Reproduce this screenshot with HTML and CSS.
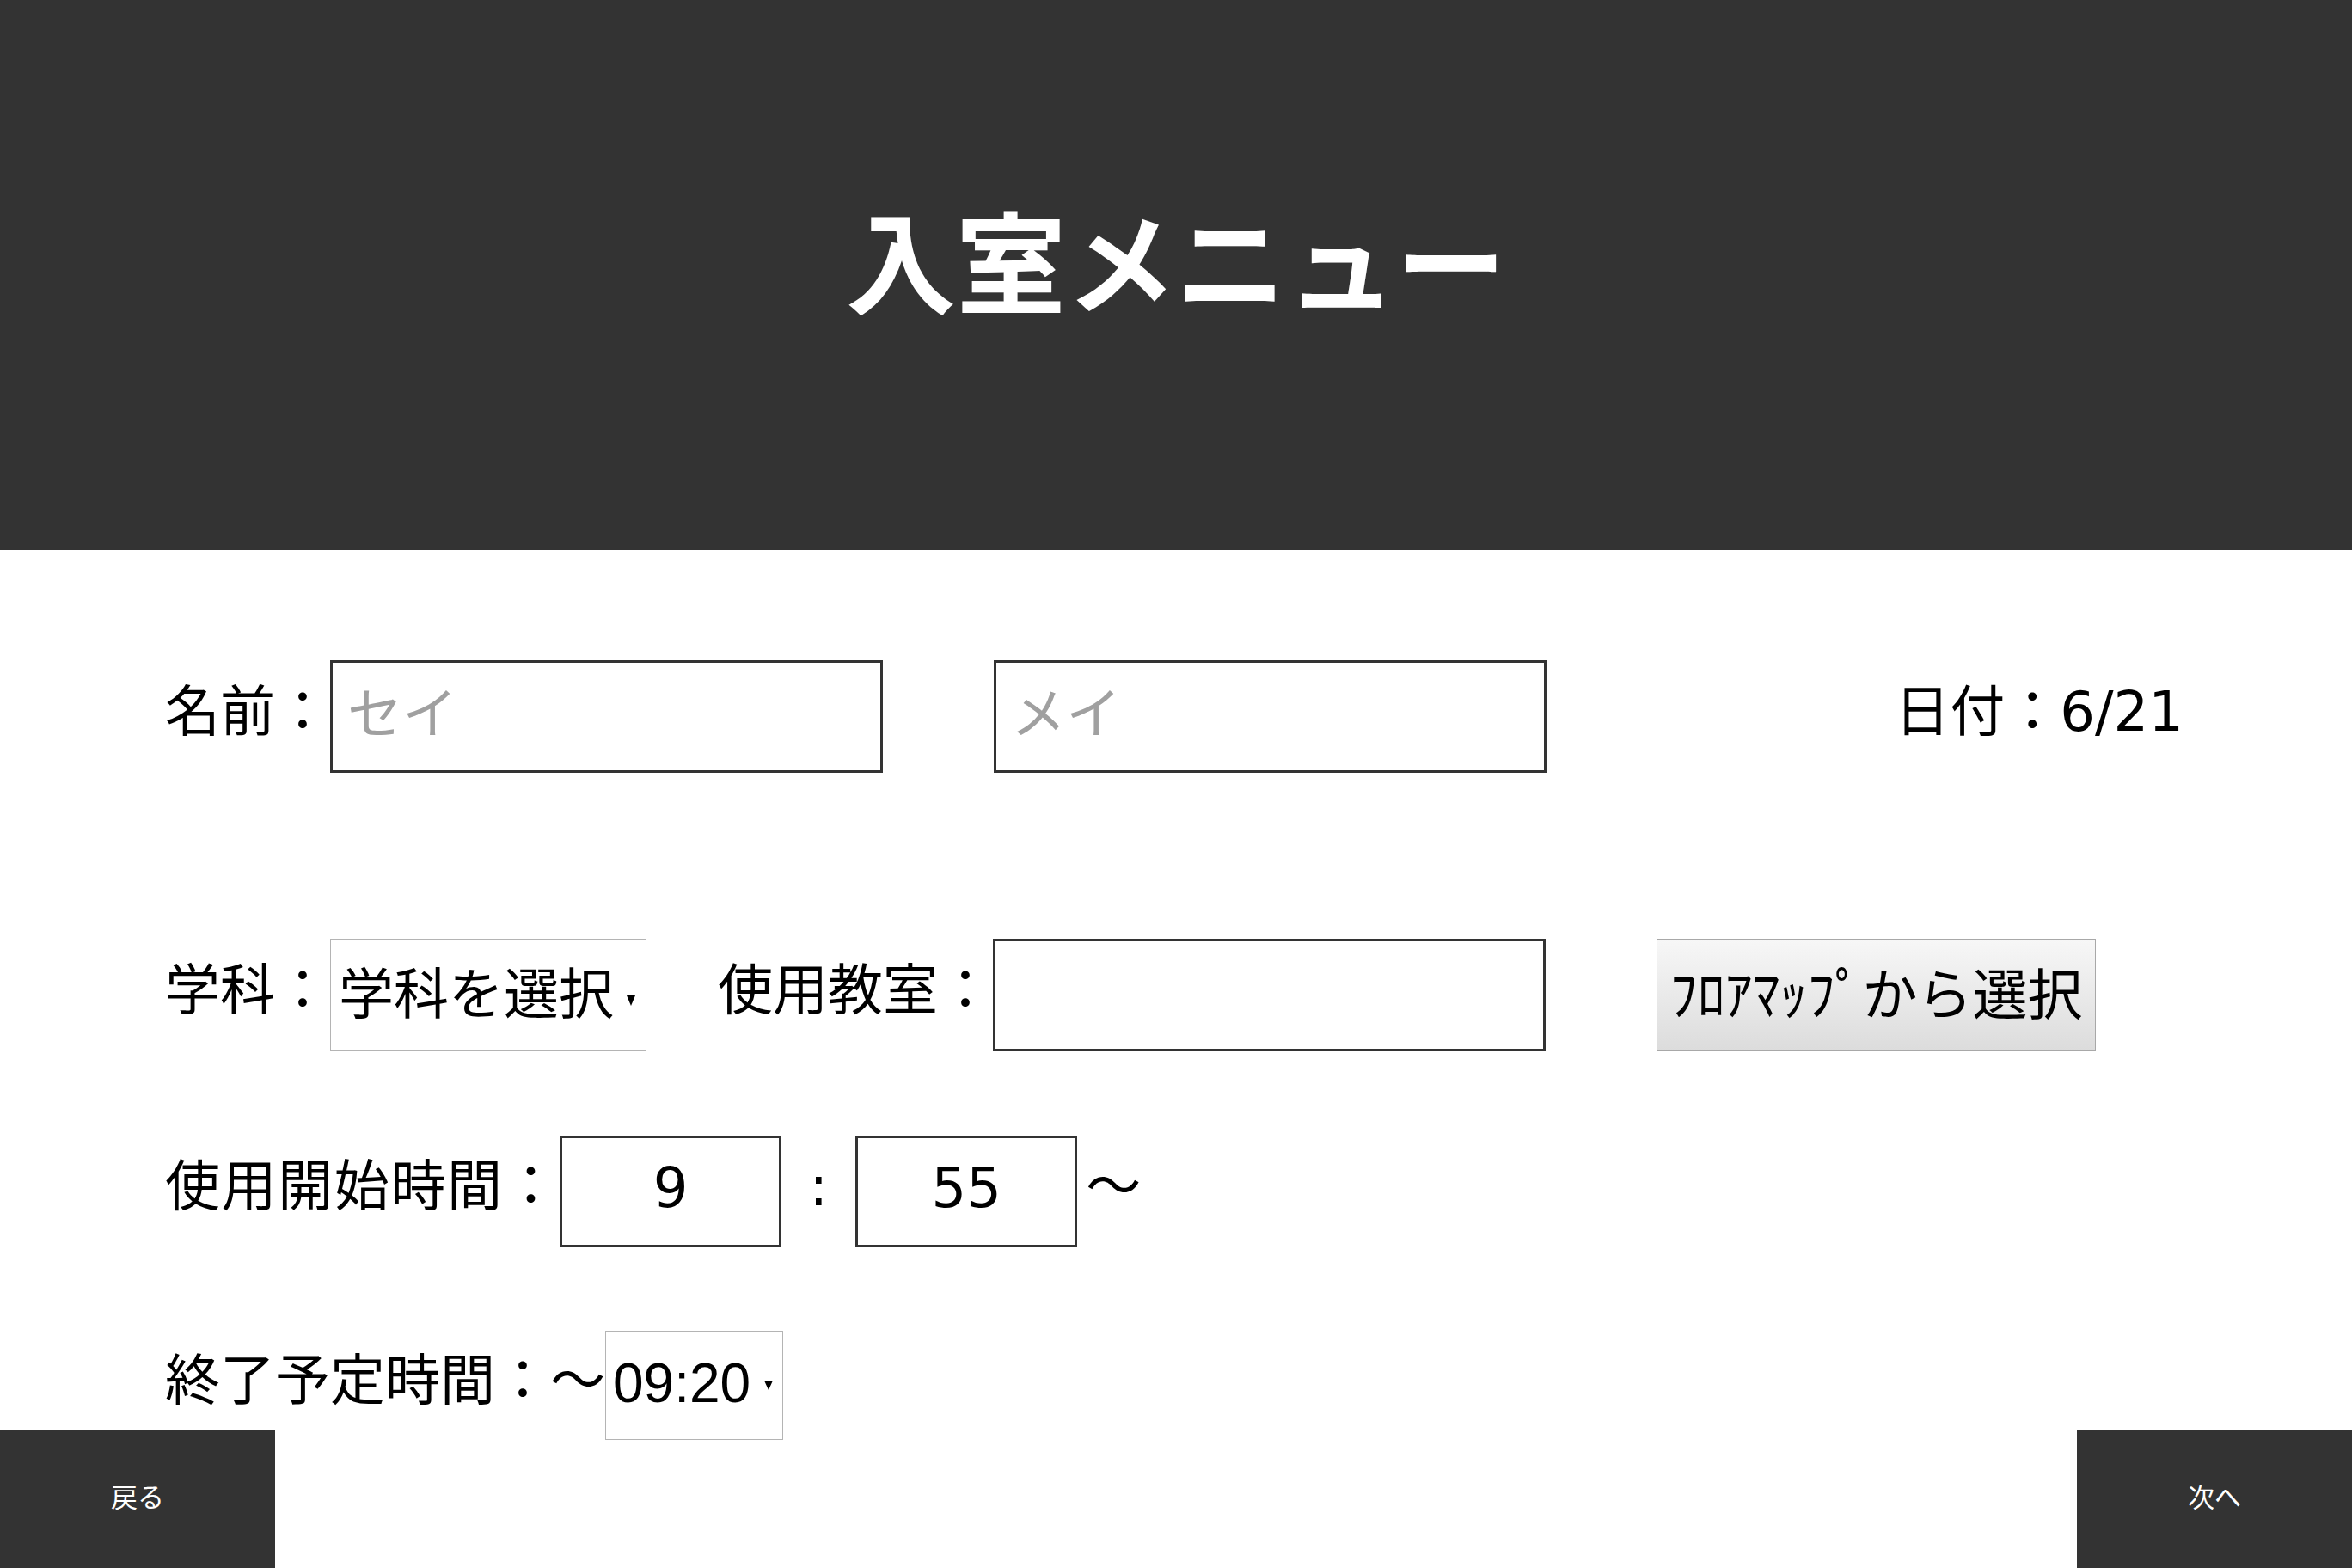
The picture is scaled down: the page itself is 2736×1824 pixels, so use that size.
FILE: index.html
```html
<!DOCTYPE html>
<html lang="ja">
<head>
<meta charset="utf-8">
<title>入室メニュー</title>
<link rel="stylesheet" href="styles.css">
</head>
<body>
<header class="header">
  <h1 class="title">入室メニュー</h1>
</header>
<main class="form">
  <div class="row row-name">
    <span class="label">名前：</span>
    <input class="text-input" type="text" placeholder="セイ">
    <input class="text-input name-gap" type="text" placeholder="メイ">
    <span class="label date">日付：6/21</span>
  </div>
  <div class="row row-dept">
    <span class="label">学科：</span>
    <div class="select-wrap select-dept">
      <select class="select jp">
        <option>学科を選択</option>
      </select>
    </div>
    <span class="label room-label">使用教室：</span>
    <input class="text-input" type="text">
    <button class="map-btn" type="button">ﾌﾛｱﾏｯﾌﾟから選択</button>
  </div>
  <div class="row row-start">
    <span class="label start-label">使用開始時間：</span>
    <input class="time-input" type="text" value="9">
    <span class="label time-colon">:</span>
    <input class="time-input" type="text" value="55">
    <span class="label tilde">～</span>
  </div>
  <div class="row row-end">
    <span class="label">終了予定時間：～</span>
    <div class="select-wrap select-time">
      <select class="select latin">
        <option>09:20</option>
      </select>
    </div>
  </div>
</main>
<button class="nav-btn nav-back" type="button">戻る</button>
<button class="nav-btn nav-next" type="button">次へ</button>
</body>
</html>
```
FILE: styles.css
```css
* {
  box-sizing: border-box;
}

html, body {
  margin: 0;
  padding: 0;
}

body {
  position: relative;
  width: 2736px;
  height: 1824px;
  overflow: hidden;
  background: #fff;
  color: #000;
  font-family: "DejaVu Sans", "Noto Sans CJK JP", sans-serif;
}

.header {
  height: 640px;
  background: #333;
  display: flex;
  align-items: center;
  justify-content: center;
}

.title {
  margin: 0;
  color: #fff;
  font-family: "Noto Sans CJK JP", sans-serif;
  font-weight: 700;
  font-size: 128px;
  line-height: 1;
  padding-bottom: 38px;
}

.form {
  display: flex;
  flex-direction: column;
  padding: 128px 196px 0 192px;
}

.row {
  display: flex;
  align-items: center;
}

.row-dept {
  margin-top: 193px;
}

.row-start {
  margin-top: 98px;
}

.row-end {
  margin-top: 97px;
}

.label {
  font-size: 64px;
  line-height: 1;
  white-space: nowrap;
  padding-bottom: 12px;
}

.text-input {
  width: 643px;
  height: 131px;
  border: 3px solid #333;
  border-radius: 0;
  background: #fff;
  padding: 0 17px 18px;
  font-family: "Noto Sans CJK JP", sans-serif;
  font-size: 64px;
  color: #000;
  outline: none;
}

.text-input::placeholder {
  color: #a0a0a0;
}

.name-gap {
  margin-left: 129px;
}

.date {
  margin-left: auto;
}

.room-label {
  margin-left: 83px;
}

.map-btn {
  margin-left: 129px;
  width: 511px;
  height: 131px;
  padding: 0 0 12px;
  border: 1px solid #a8a8a8;
  background: linear-gradient(#f7f7f7, #dcdcdc);
  color: #000;
  font-family: "Noto Sans CJK JP", sans-serif;
  font-size: 64px;
  white-space: nowrap;
}

.select-wrap {
  position: relative;
  display: flex;
}

.select-wrap::after {
  content: "";
  position: absolute;
  top: 50%;
  width: 0;
  height: 0;
  border-left: 5px solid transparent;
  border-right: 5px solid transparent;
  border-top: 12px solid #000;
  pointer-events: none;
}

.select-dept {
  width: 368px;
  height: 131px;
}

.select-dept::after {
  right: 13px;
  margin-top: 0;
}

.select-time {
  width: 207px;
  height: 127px;
}

.select-time::after {
  right: 12px;
  margin-top: -6px;
  border-top-width: 11px;
}

.select {
  appearance: none;
  -webkit-appearance: none;
  width: 100%;
  height: 100%;
  margin: 0;
  border: 1px solid #b4b4b4;
  border-radius: 0;
  background: #fff;
  color: #000;
  font-size: 64px;
  padding: 0 0 14px 9px;
  outline: none;
}

.select.jp {
  font-family: "Noto Sans CJK JP", sans-serif;
}

.select.latin {
  font-family: "Liberation Sans", "Noto Sans CJK JP", sans-serif;
  padding: 0 0 6px 8px;
}

.start-label {
  letter-spacing: 1.6px;
}

.time-input {
  width: 258px;
  height: 130px;
  border: 3px solid #333;
  border-radius: 0;
  background: #fff;
  text-align: center;
  font-family: "DejaVu Sans", sans-serif;
  font-size: 64px;
  color: #000;
  padding: 0 0 8px;
  outline: none;
}

.time-colon {
  width: 86px;
  text-align: center;
}

.tilde {
  margin-left: 10px;
}

.nav-btn {
  position: absolute;
  bottom: 0;
  width: 320px;
  height: 160px;
  border: none;
  padding: 0 0 10px;
  background: #333;
  color: #fff;
  font-family: "Noto Sans CJK JP", sans-serif;
  font-size: 31px;
}

.nav-back {
  left: 0;
}

.nav-next {
  right: 0;
}
```
